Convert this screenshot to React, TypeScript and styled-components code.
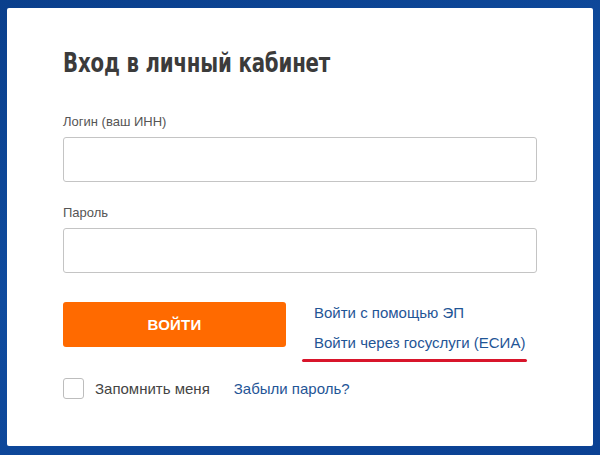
import React from 'react';
import styled, { createGlobalStyle } from 'styled-components';

const GlobalStyle = createGlobalStyle`
  html, body {
    margin: 0;
    padding: 0;
    background: #0c4394;
  }
  * {
    box-sizing: border-box;
  }
`;

const Page = styled.div`
  width: 600px;
  height: 455px;
  padding: 8px 7px 9px 7px;
  background: linear-gradient(160deg, #0a3f8c 0%, #0f4b9e 45%, #0b4193 100%);
  font-family: 'Liberation Sans', Arial, sans-serif;
`;

const Card = styled.div`
  height: 100%;
  background: #fff;
  border-radius: 2px;
  padding: 0 56px;
  display: flex;
  flex-direction: column;
`;

const Title = styled.h1`
  margin: 38px 0 0;
  font-family: 'DejaVu Sans Condensed', 'DejaVu Sans', sans-serif;
  font-stretch: condensed;
  font-weight: 700;
  font-size: 26px;
  line-height: 34px;
  color: #3b3b3b;
  letter-spacing: -0.2px;
  white-space: nowrap;
`;

// the heading face in the shot is a narrow DIN-like font; squeeze DejaVu to match
const TitleText = styled.span`
  display: inline-block;
  transform: scaleX(0.845);
  transform-origin: left center;
`;

const Field = styled.div<{ $top: number }>`
  margin-top: ${(p) => p.$top}px;
  display: flex;
  flex-direction: column;
`;

const Label = styled.label`
  font-size: 13px;
  line-height: 15px;
  color: #555;
  margin-bottom: 8px;
`;

const Input = styled.input`
  width: 100%;
  height: 45px;
  border: 1px solid #c4c4c4;
  border-radius: 3px;
  outline: none;
  padding: 0 12px;
  font-size: 14px;
`;

const ActionRow = styled.div`
  margin-top: 29px;
  display: flex;
  align-items: flex-start;
  gap: 28px;
`;

const SubmitButton = styled.button`
  width: 223px;
  height: 45px;
  border: none;
  border-radius: 3px;
  background: #ff6a00;
  color: #fff;
  font-family: 'Liberation Sans', Arial, sans-serif;
  font-weight: 700;
  font-size: 15px;
  letter-spacing: 0.2px;
  cursor: pointer;
`;

const LinkColumn = styled.div`
  display: flex;
  flex-direction: column;
  gap: 13px;
  padding-top: 2px;
`;

const Link = styled.a`
  font-size: 15px;
  line-height: 17px;
  color: #1f5596;
  text-decoration: none;
  cursor: pointer;
`;

const Marked = styled.div`
  display: flex;
  flex-direction: column;
`;

const RedMark = styled.span`
  display: block;
  height: 3px;
  margin: 8px -2px 0 -12px;
  border-radius: 2px;
  background: #d8152b;
`;

const BottomRow = styled.div`
  margin-top: 16px;
  display: flex;
  align-items: center;
`;

const Check = styled.input.attrs({ type: 'checkbox' })`
  appearance: none;
  margin: 0 11px 0 0;
  width: 21px;
  height: 21px;
  border: 1px solid #bdbdbd;
  border-radius: 3px;
  background: #fff;
`;

const CheckLabel = styled.span`
  font-size: 15px;
  color: #444;
  margin-right: 24px;
`;

export default function App() {
  return (
    <>
      <GlobalStyle />
      <Page>
        <Card>
          <Title>
            <TitleText>Вход в личный кабинет</TitleText>
          </Title>
          <Field $top={34}>
            <Label>Логин (ваш ИНН)</Label>
            <Input />
          </Field>
          <Field $top={23}>
            <Label>Пароль</Label>
            <Input type="password" />
          </Field>
          <ActionRow>
            <SubmitButton>ВОЙТИ</SubmitButton>
            <LinkColumn>
              <Link>Войти с помощью ЭП</Link>
              <Marked>
                <Link>Войти через госуслуги (ЕСИА)</Link>
                <RedMark />
              </Marked>
            </LinkColumn>
          </ActionRow>
          <BottomRow>
            <Check />
            <CheckLabel>Запомнить меня</CheckLabel>
            <Link>Забыли пароль?</Link>
          </BottomRow>
        </Card>
      </Page>
    </>
  );
}
